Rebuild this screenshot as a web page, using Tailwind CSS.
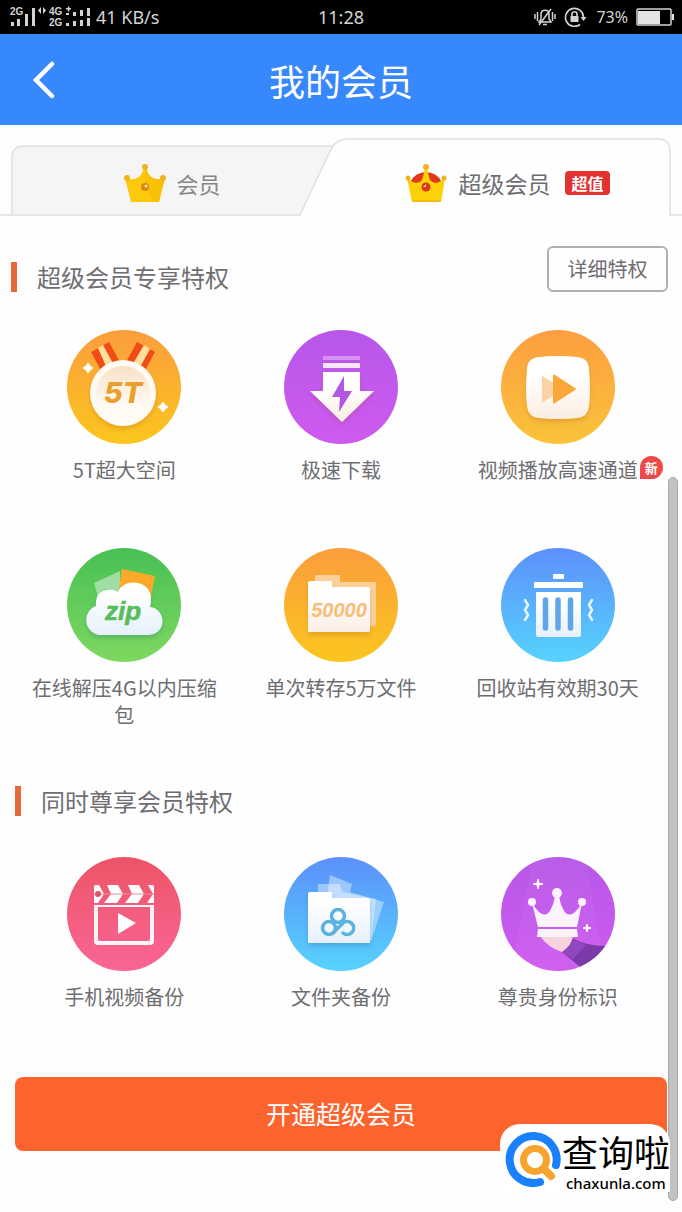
<!DOCTYPE html>
<html lang="zh-CN">
<head>
<meta charset="utf-8">
<meta name="viewport" content="width=device-width, initial-scale=1">
<title>我的会员</title>
<script src="https://cdn.jsdelivr.net/npm/@tailwindcss/browser@4"></script>
</head>
<body class="relative min-h-screen bg-[#fefefe] pb-15 font-['Noto_Sans_CJK_SC',sans-serif] text-[#6e6e72]">

<!-- Shared gradients -->
<svg class="absolute size-0" aria-hidden="true">
  <defs>
    <linearGradient id="orange" x2="0" y2="1"><stop stop-color="#fb9d3d"/><stop offset="1" stop-color="#fbc61e"/></linearGradient>
    <linearGradient id="amber" x2="0" y2="1"><stop stop-color="#fd9e41"/><stop offset="1" stop-color="#fac33a"/></linearGradient>
    <linearGradient id="purple" x2="0" y2="1"><stop stop-color="#b757e9"/><stop offset="1" stop-color="#cf5af0"/></linearGradient>
    <linearGradient id="green" x2="0" y2="1"><stop stop-color="#48c055"/><stop offset="1" stop-color="#7ed860"/></linearGradient>
    <linearGradient id="blue" x2="0" y2="1"><stop stop-color="#5c90fb"/><stop offset="1" stop-color="#56d3fd"/></linearGradient>
    <linearGradient id="pink" x2="0" y2="1"><stop stop-color="#ec5566"/><stop offset="1" stop-color="#fb6596"/></linearGradient>
    <linearGradient id="medal" x2="0" y2="1"><stop stop-color="#fae0c6"/><stop offset=".7" stop-color="#fffaf4"/></linearGradient>
    <linearGradient id="cream" x2="0" y2="1"><stop offset=".3" stop-color="#fff"/><stop offset="1" stop-color="#fbeee2"/></linearGradient>
    <linearGradient id="frost" x2="0" y2="1"><stop offset=".2" stop-color="#fff"/><stop offset="1" stop-color="#e6f0fc"/></linearGradient>
    <filter id="soft" x="-20%" y="-20%" width="140%" height="150%"><feDropShadow dx="0" dy="3" stdDeviation="2" flood-color="#8a4a10" flood-opacity=".2"/></filter>
    <filter id="cool" x="-20%" y="-20%" width="140%" height="150%"><feDropShadow dx="0" dy="3" stdDeviation="2" flood-color="#1a5a80" flood-opacity=".25"/></filter>
    <clipPath id="disc"><circle cx="57" cy="57" r="57"/></clipPath>
  </defs>
</svg>

<!-- Status bar -->
<div class="relative flex h-[34px] items-center justify-between bg-black px-2 font-['Noto_Sans',sans-serif] text-base text-[#d4d4d4]">
  <div class="flex items-center gap-1">
    <svg class="h-[34px] w-[84px]" viewBox="0 0 84 34" fill="#d4d4d4" font-family="Liberation Sans" font-size="10" font-weight="700" aria-hidden="true">
      <text x="2" y="15">2G</text>
      <path d="M3 22h3v4H3zM9 19h3v7H9zM17 14h3v12h-3zM24 8h3v18h-3z"/>
      <path d="M33 7v7l-3-3.500zM35 7v7l3-3.500z"/>
      <text x="41" y="15">4G</text><path d="M58 8h5v1.500h-5zM59.800 6.500h1.500v5h-1.500zM58 13h3v2h-3z"/>
      <text x="41" y="26">2G</text>
      <path d="M58 23h3v3h-3zM65 21h3v5h-3zM72 20h3v6h-3zM79 18h3v8h-3zM65 12h3v4h-3zM72 10h3v6h-3zM79 8h3v8h-3z"/>
    </svg>
    <span class="text-lg leading-none">41 KB/s</span>
  </div>
  <span class="absolute left-1/2 -translate-x-1/2 text-lg">11:28</span>
  <div class="flex items-center gap-2">
    <svg class="h-5 w-[22px]" viewBox="0 0 22 20" fill="none" stroke="#d4d4d4" stroke-width="1.500" aria-hidden="true">
      <path d="M1 7v5M3.500 5v9M21 7v5M18.500 5v9M5 15h12l-2-3V7c0-5-8-5-8 0v5zM9 17.500h4M5 18 17 2"/>
    </svg>
    <svg class="h-5 w-6" viewBox="0 0 24 20" fill="none" stroke="#d4d4d4" stroke-width="1.600" aria-hidden="true">
      <path d="M16 17.500A9 9 0 1 1 19.500 10"/><path d="m16.500 10 3 4 3-4z" fill="#d4d4d4" stroke="none"/>
      <path d="M6.500 9h8v6h-8z" fill="#d4d4d4" stroke="none"/><path d="M8 9V7c0-3 5-3 5 0v2"/>
    </svg>
    <span>73%</span>
    <svg class="h-[18px] w-[38px]" viewBox="0 0 38 18" aria-hidden="true">
      <rect x="1" y="1" width="34" height="16" rx="1" fill="none" stroke="#d4d4d4" stroke-width="1.500"/>
      <path d="M2 3h22v13H2zM36 6h2v6h-2z" fill="#e4e4e4"/>
    </svg>
  </div>
</div>

<!-- Title bar -->
<header class="flex h-[91px] items-center justify-between bg-[#3888fd] px-6 text-white">
  <button type="button" aria-label="返回" class="flex size-10 items-center justify-center">
    <svg class="h-10 w-6" viewBox="0 0 24 40" fill="none" stroke="#fff" stroke-width="4.500" stroke-linecap="round" stroke-linejoin="miter" aria-hidden="true"><path d="M20 4 4 20l16 16"/></svg>
  </button>
  <h1 class="text-4xl">我的会员</h1>
  <span class="w-10"></span>
</header>

<!-- Membership tabs -->
<div role="tablist" class="relative mt-[13px] grid h-[78px] grid-cols-2">
  <svg class="absolute inset-0 size-full" viewBox="0 0 682 78" preserveAspectRatio="none" fill="none" stroke="#dfdfdf" stroke-width="1.500" aria-hidden="true">
    <path d="M12 77V20Q12 8 24 8H333L300 77Z" fill="#f5f5f5" stroke="none"/>
    <path d="M0 77H300L331 11Q336 1 348 1H658Q670 1 670 13V77H682M12 77V20Q12 8 24 8H333"/>
  </svg>
  <button type="button" role="tab" aria-selected="false" class="relative flex items-center justify-center gap-[10px] pt-3 pl-1 text-[22px] text-[#858585]">
    <svg class="h-[39px] w-[42px]" viewBox="0 0 42 39" aria-hidden="true">
      <path d="M1 14Q13 18 18 9L20 3h2l2 6Q29 18 41 14L35 38H7Z" fill="#fdc90c"/>
      <path d="M21 3h1l2 6Q29 18 41 14L35 38H30L21 24z" fill="#f8bb08" opacity=".7"/>
      <g fill="#f0b322"><circle cx="21" cy="3" r="3"/><circle cx="3" cy="14" r="3"/><circle cx="39" cy="14" r="3"/></g>
      <circle cx="21" cy="23" r="4" fill="#d98a10"/><circle cx="22" cy="22" r="1.500" fill="#fbe4a0"/>
    </svg>
    <span>会员</span>
  </button>
  <button type="button" role="tab" aria-selected="true" class="relative flex items-center justify-center gap-[11px] pt-3 pr-2 text-[23px] text-[#6e6e72]">
    <svg class="h-[39px] w-[42px]" viewBox="0 0 42 39" aria-hidden="true">
      <path d="M5 19Q11 8 21 8t16 11L21 26Z" fill="#e2391d"/>
      <path d="M2 14Q11 21 16 17L20 4h2l4 13Q31 21 40 14L36 38H7Z" fill="#fdd007"/>
      <path d="M6 17Q10 9 19 9L17 16Q12 21 6 17M36 17Q32 9 23 9l2 7Q30 21 36 17" fill="#e2391d"/>
      <g fill="#f0b322"><circle cx="21" cy="3" r="3"/><circle cx="3" cy="14" r="2.500"/><circle cx="39" cy="14" r="2.500"/></g>
      <circle cx="21" cy="23" r="4.500" fill="#dd3516"/><path d="M21 23v-3l-3 3z" fill="#ffd9a0"/><path d="M8 36h28v2H8z" fill="#f1bd13"/>
    </svg>
    <span>超级会员</span>
    <span class="ml-1 rounded-sm bg-[#e33030] px-[6px] text-base leading-6 font-bold text-white">超值</span>
  </button>
</div>

<main class="pr-[14px] pl-[11px]">
  <section>
    <div class="mt-[30px] flex items-end justify-between">
      <h2 class="flex items-center gap-5 text-2xl leading-[30px]"><span class="h-[30px] w-[6px] bg-[#e8683a]"></span>超级会员专享特权</h2>
      <button type="button" class="h-[46px] w-[121px] rounded-md border-2 border-[#b0b0b0] text-xl leading-none">详细特权</button>
    </div>

    <ul class="mt-[38px] grid grid-cols-3 gap-y-[65px] pr-[2px] pl-[5px] text-center text-xl leading-[27px]">
      <li class="flex flex-col items-center gap-3">
        <svg class="size-[114px]" viewBox="0 0 114 114" aria-hidden="true">
          <circle cx="57" cy="57" r="57" fill="url(#orange)"/>
          <path d="m24 22 18-10 12 22-18 10zM70 12l18 10-12 22-18-10z" fill="#f14b17"/>
          <path d="m31 18 5-3 12 22-7 4zM77 15l6 4-12 22-7-4z" fill="#fedf9e"/>
          <circle cx="56" cy="63" r="33" fill="#fffaf4" filter="url(#soft)"/>
          <circle cx="56" cy="63" r="27" fill="url(#medal)"/>
          <text x="56" y="73" text-anchor="middle" font-family="Inter" font-style="italic" font-weight="800" font-size="29" fill="#e9a02a">5T</text>
          <path d="m21 33 2 3 3 2-3 2-2 3-2-3-3-2 3-2zM96 72l2 3 3 2-3 2-2 3-2-3-3-2 3-2z" fill="#fff" stroke="#fff"/>
        </svg>
        <span>5T超大空间</span>
      </li>
      <li class="flex flex-col items-center gap-3">
        <svg class="size-[114px]" viewBox="0 0 114 114" aria-hidden="true">
          <circle cx="57" cy="57" r="57" fill="url(#purple)"/>
          <path d="M39 26h37v4H39z" fill="#fff" opacity=".35"/><path d="M39 33h37v5H39z" fill="#fff" opacity=".85"/>
          <path d="M39 42h37v19h14L58 92 26 61h13z" fill="url(#cream)" filter="url(#soft)"/>
          <path d="M60 46 48 67h8l-1 15 13-21h-8z" fill="#b257e2"/>
        </svg>
        <span>极速下载</span>
      </li>
      <li class="flex flex-col items-center gap-3">
        <svg class="size-[114px]" viewBox="0 0 114 114" aria-hidden="true">
          <circle cx="57" cy="57" r="57" fill="url(#amber)"/>
          <path d="M26 40Q26 28 38 27Q57 25 76 27Q88 28 88 40Q90 58 88 76Q87 87 76 88Q57 90 38 88Q27 87 26 76Q24 58 26 40Z" fill="url(#cream)" filter="url(#soft)"/>
          <path d="M41 46 63 59 41 73z" fill="#fbd3a4"/><path d="M52 45q0-1 2 0l20 13q2 1 0 2L54 73q-2 1-2 0z" fill="#f9a838"/>
        </svg>
        <span class="relative">视频播放高速通道
          <span class="absolute bottom-1 left-full ml-[2px] flex size-[23px] items-center justify-center rounded-full rounded-bl-none bg-[#ee4848] text-[13px] leading-none font-bold text-white">新</span>
        </span>
      </li>
      <li class="flex flex-col items-center gap-3">
        <svg class="size-[114px]" viewBox="0 0 114 114" aria-hidden="true">
          <circle cx="57" cy="57" r="57" fill="url(#green)"/>
          <path d="m27 35 26-12v26H31z" fill="#a0dea4"/><path d="m55 21 33 7-5 25-32-6z" fill="#fdaa2a"/>
          <path d="M33 87A15 15 0 0 1 29 58Q28 43 41 42Q46 41 51 44C56 30 84 31 84 51Q84 56 83 59A14 14 0 0 1 80 87Z" fill="url(#frost)" filter="url(#cool)"/>
          <text x="56" y="72" text-anchor="middle" font-family="Liberation Sans" font-style="italic" font-weight="700" font-size="26" fill="#55bd5a" stroke="#55bd5a" stroke-width=".6">zip</text>
        </svg>
        <span class="max-w-[196px]">在线解压4G以内压缩包</span>
      </li>
      <li class="flex flex-col items-center gap-3">
        <svg class="size-[114px]" viewBox="0 0 114 114" aria-hidden="true">
          <circle cx="57" cy="57" r="57" fill="url(#orange)"/>
          <path d="M31 29q0-2 2-2h23v7h36v42q0 2-2 2H31z" fill="#fdd09a"/>
          <path d="M24 35q0-2 2-2h22v6h36q2 0 2 2v43H24z" fill="url(#cream)" filter="url(#soft)"/>
          <text x="55" y="69" text-anchor="middle" font-family="Liberation Sans" font-style="italic" font-weight="700" font-size="20" fill="#f4be7a">50000</text>
        </svg>
        <span>单次转存5万文件</span>
      </li>
      <li class="flex flex-col items-center gap-3">
        <svg class="size-[114px]" viewBox="0 0 114 114" aria-hidden="true">
          <circle cx="57" cy="57" r="57" fill="url(#blue)"/>
          <rect x="52" y="26" width="11" height="5" rx="1" fill="#fff"/><rect x="33" y="34" width="49" height="6" rx="1" fill="#fff"/>
          <path d="M35 44h45v43q0 2-2 2H37q-2 0-2-2z" fill="url(#frost)"/>
          <path d="M44.500 52v28M57 52v28M69.500 52v28" stroke="#5fa5e8" stroke-width="5.500" stroke-linecap="round"/>
          <path d="m24 52 3 5-3 5 3 5-3 5M91 52l-3 5 3 5-3 5 3 5" fill="none" stroke="#e6f6ff" stroke-width="2.500" stroke-linecap="round" stroke-linejoin="round"/>
        </svg>
        <span>回收站有效期30天</span>
      </li>
    </ul>
  </section>

  <section>
    <h2 class="mt-[58px] ml-1 flex items-center gap-5 text-2xl leading-[30px]"><span class="h-[30px] w-[6px] bg-[#e8683a]"></span>同时尊享会员特权</h2>
    <ul class="mt-[41px] grid grid-cols-3 pr-[2px] pl-[5px] text-center text-xl leading-[27px]">
      <li class="flex flex-col items-center gap-3">
        <svg class="size-[114px]" viewBox="0 0 114 114" aria-hidden="true">
          <circle cx="57" cy="57" r="57" fill="url(#pink)"/>
          <g fill="#fff">
            <path d="M27 30q0-2 2-2h3l5 9-6 9h-4zM40 28h11l5 9-6 9H37l7-9zM61 28h11l5 9-6 9H58l7-9zM81 28h4q2 0 2 2v16h-7l6-9z"/>
            <path fill-rule="evenodd" d="M27 48h60v36q0 4-4 4H31q-4 0-4-4zM31 50v32q0 2 2 2h48q2 0 2-2V50z" opacity=".93"/>
            <path d="m51 56 18 10-18 11z"/>
          </g>
          <path d="M27 37h60" stroke="#f08c9c"/><circle cx="31" cy="37" r="3" fill="#df5068"/>
        </svg>
        <span>手机视频备份</span>
      </li>
      <li class="flex flex-col items-center gap-3">
        <svg class="size-[114px]" viewBox="0 0 114 114" aria-hidden="true">
          <circle cx="57" cy="57" r="57" fill="url(#blue)"/>
          <path d="m46 18 22 9-2 8 34 10-13 39-50-6z" fill="#fff" opacity=".4"/>
          <path d="M34 27h22l2 8 34 7-5 41-53-3z" fill="#fff" opacity=".4"/>
          <path d="M24 37q0-2 2-2h22v6h36q2 0 2 2v43H24z" fill="url(#frost)" filter="url(#cool)"/>
          <g fill="none" stroke="#5bb2de" stroke-width="3.500" stroke-linecap="round"><circle cx="54" cy="59" r="6.500"/><circle cx="45" cy="71" r="6.500"/><path d="M49 76 59 66A6.500 6.500 0 1 1 59 76"/></g>
        </svg>
        <span>文件夹备份</span>
      </li>
      <li class="flex flex-col items-center gap-3">
        <svg class="size-[114px]" viewBox="0 0 114 114" aria-hidden="true">
          <circle cx="57" cy="57" r="57" fill="url(#purple)"/>
          <g clip-path="url(#disc)">
            <path d="M32 0 10 114h94L84 0z" fill="#fff" opacity=".04"/>
            <path d="M71 81q14 8 34 8v25H84L61 95z" fill="#7c3aa8"/><path d="m71 82 14 6-13 14-11-7z" fill="#8f48c0"/>
          </g>
          <path d="M39 79h33q-1 9-11 16Q46 90 39 79z" fill="#f6d3dc"/>
          <g fill="#fbf3fd">
            <circle cx="31" cy="45" r="4"/><circle cx="56" cy="36" r="5"/><circle cx="81" cy="45" r="4"/>
            <path d="M31 46Q42 64 49 54Q53 47 54 39h4Q59 47 63 54Q70 64 81 46L76 70H37zM37 72h39l1 8H36z"/>
            <path d="m37 22 1 4 4 1-4 1-1 4-1-4-4-1 4-1zM86 67l1 3 3 1-3 1-1 3-1-3-3-1 3-1z" stroke="#fbf3fd"/>
          </g>
        </svg>
        <span>尊贵身份标识</span>
      </li>
    </ul>
  </section>

  <button type="button" class="mt-[67px] ml-1 block h-[74px] w-[calc(100%-5px)] rounded-lg bg-[#fd632d] text-[25px] text-white">开通超级会员</button>
</main>

<!-- Scroll indicator -->
<div class="absolute top-[477px] right-1 bottom-[11px] w-[10px] rounded-full border border-[#a9a9a9] bg-[#c2c2c2]"></div>

<!-- Site mark over the page corner -->
<a href="#" class="absolute right-3 bottom-5 flex items-center gap-[1px] rounded-t-[20px] bg-white pt-1 pl-[5px] text-black">
  <svg class="size-[56px]" viewBox="0 0 56 56" fill="none" aria-hidden="true">
    <path d="M51 33A23.500 23.500 0 1 0 35 50" stroke="#1b80fb" stroke-width="8" stroke-linecap="round"/>
    <circle cx="30" cy="28" r="11.500" stroke="#f6a42c" stroke-width="7"/><path d="m39 37 7 7" stroke="#f6a42c" stroke-width="8" stroke-linecap="round"/>
  </svg>
  <span class="flex flex-col">
    <span class="text-4xl leading-[46px]">查询啦</span>
    <span class="pl-1 font-['Noto_Sans',sans-serif] text-[15px] leading-[18px] font-medium">chaxunla.com</span>
  </span>
</a>
</body>
</html>
